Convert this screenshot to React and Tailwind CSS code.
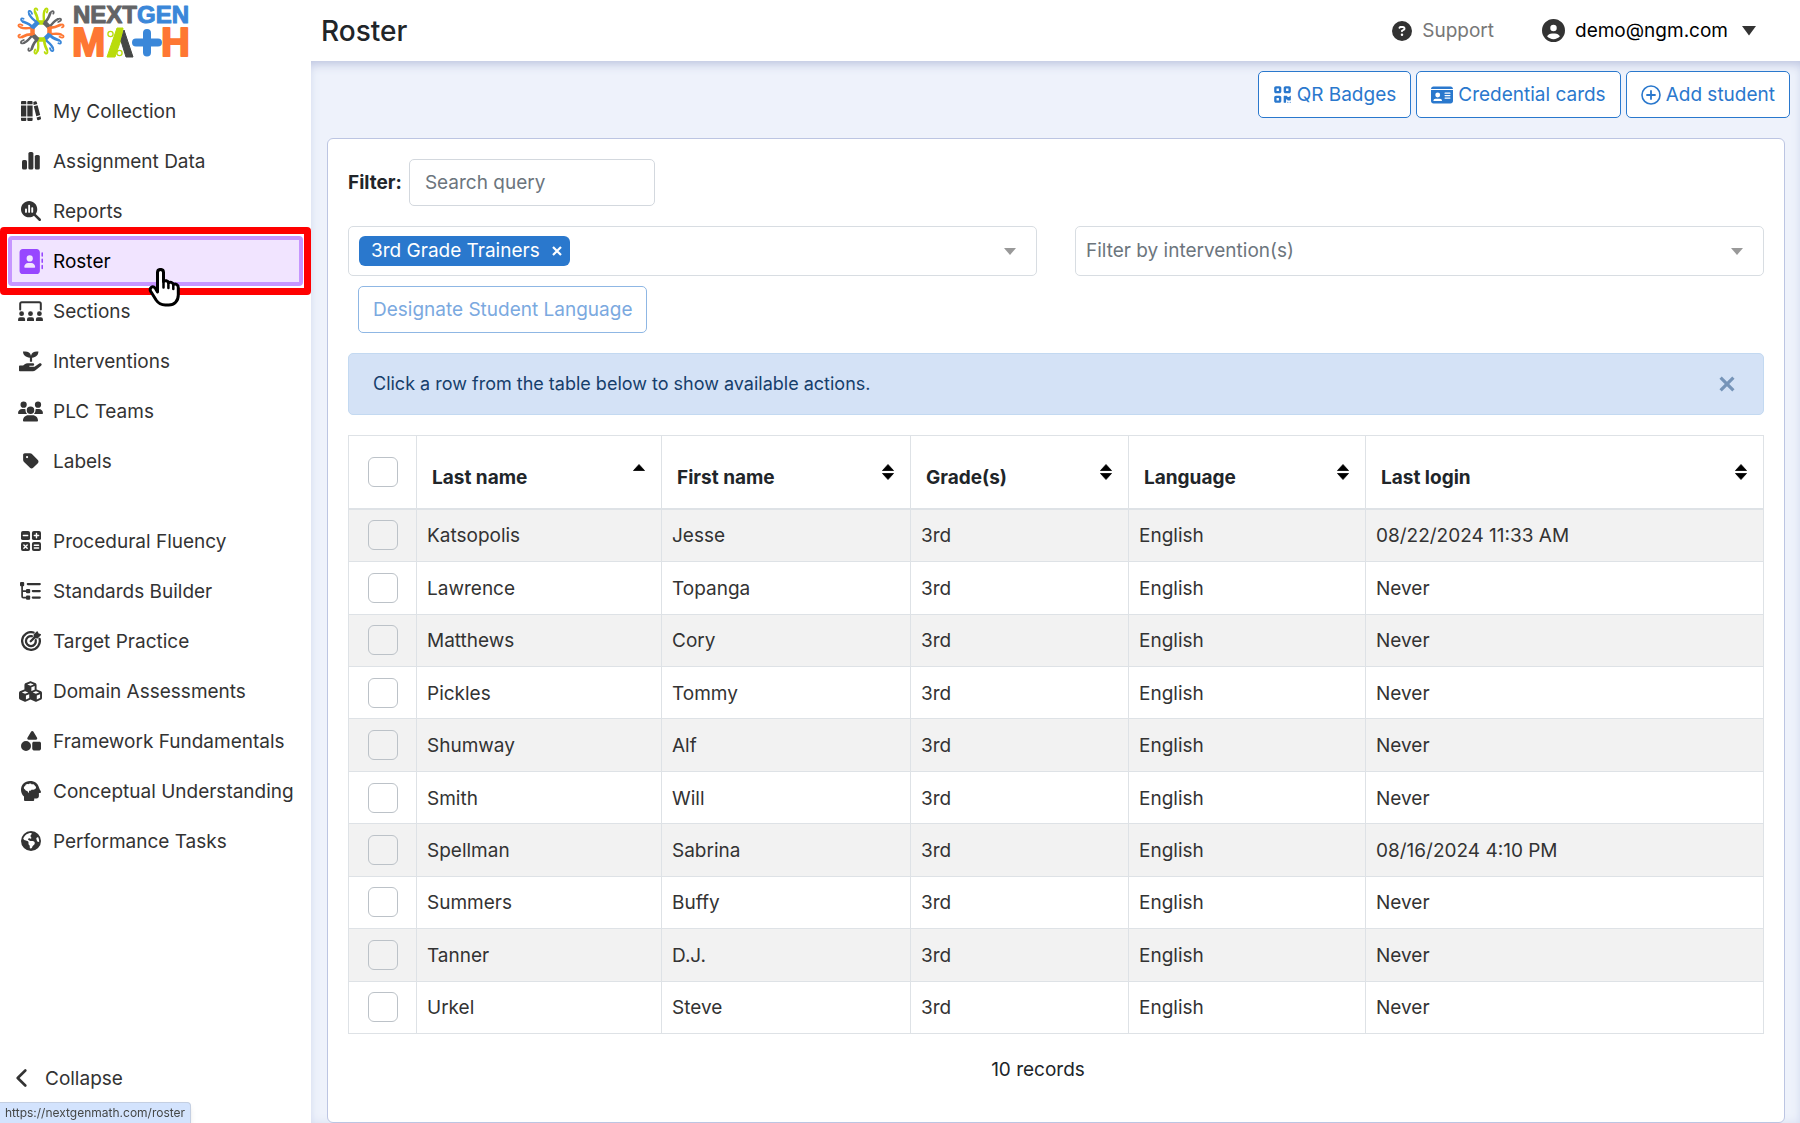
import React, { useState } from 'react'
import {
  FaAddressBook,
  FaCircleQuestion,
  FaCircleUser,
  FaCubes,
  FaEarthAmericas,
  FaIdCard,
  FaMagnifyingGlassChart,
  FaQrcode,
  FaShapes,
  FaTag,
  FaUsers,
} from 'react-icons/fa6'

function BooksIcon() {
  return (
    <svg width="20" height="20" viewBox="0 0 20 20" fill="currentColor" aria-hidden="true">
      <path d="M1 0h3.400a.9.9 0 0 1 .9.9V3.200H0V1a1 1 0 0 1 1-1zM0 4.400h5.300v11.200H0zM0 16.800h5.300v2.300a.9.9 0 0 1-.9.9H1a1 1 0 0 1-1-1z" />
      <path d="M7.300 0h3.400a.9.9 0 0 1 .9.900V3.200H6.300V1a1 1 0 0 1 1-1zM6.300 4.400h5.300v11.200H6.300zM6.300 16.800h5.300v2.300a.9.9 0 0 1-.9.900H7.300a1 1 0 0 1-1-1z" />
      <path d="M12.300.9l2.200-.7a1 1 0 0 1 1.200.7l.6 2.100-3.700 1zM12.800 5.300l3.800-1 2.600 9.800-3.900 1.100zM15.600 16.400l3.900-1.100.5 2.100a1 1 0 0 1-.7 1.200l-2 .6a1 1 0 0 1-1.200-.7z" />
    </svg>
  )
}

function BarsIcon() {
  return (
    <svg width="20" height="20" viewBox="0 0 20 20" fill="currentColor" aria-hidden="true">
      <rect x="1" y="9" width="5" height="9.500" rx="1.600" />
      <rect x="7.400" y="1" width="5" height="17.500" rx="1.600" />
      <rect x="13.800" y="4" width="5" height="14.500" rx="1.600" />
    </svg>
  )
}

function ScreenUsersIcon() {
  return (
    <svg width="25" height="20" viewBox="0 0 25 20" fill="currentColor" aria-hidden="true">
      <path d="M2.200 8.500V2.700A1.500 1.500 0 0 1 3.700 1.200h17.600a1.500 1.500 0 0 1 1.500 1.500v5.800" fill="none" stroke="currentColor" strokeWidth="2" strokeLinecap="round" />
      {[3.600, 12.500, 21.400].map((x) => (
        <g key={x} transform={`translate(${x} 0)`}>
          <circle cx="0" cy="12.700" r="2.400" />
          <path d="M-1.500 16.200h3a2 2 0 0 1 2 2v1.800h-7v-1.800a2 2 0 0 1 2-2z" />
        </g>
      ))}
    </svg>
  )
}

function HandSeedlingIcon() {
  return (
    <svg width="23" height="21" viewBox="0 0 23 21" fill="currentColor" aria-hidden="true">
      <path d="M4 .6h2.200c3 0 5.200 1.500 5.800 4.100C12.600 2.100 14.800.6 17.800.6H19.400c0 3.600-2.400 5.900-6.300 6.100v4h-2.200v-4C6.800 6.500 4 4.200 4 .6z" />
      <path d="M.8 14.600h3.300l1.600-1.300c.9-.7 1.900-1 3-1h5.200c1.700 0 1.700 2.500 0 2.500H10.400v1h5.200l4.600-3.300c1.700-1.100 3.400.9 1.900 2.200l-5.600 4.600c-.8.600-1.600.9-2.600.9H.8a.8.8 0 0 1-.8-.8v-4a.8.800 0 0 1 .8-.8z" />
    </svg>
  )
}

function CalculatorIcon() {
  return (
    <svg width="20" height="20" viewBox="0 0 21 21" fill="currentColor" aria-hidden="true">
      <rect x="0" y="0" width="9.500" height="9.500" rx="2" />
      <rect x="11.500" y="0" width="9.500" height="9.500" rx="2" />
      <rect x="0" y="11.500" width="9.500" height="9.500" rx="2" />
      <rect x="11.500" y="11.500" width="9.500" height="9.500" rx="2" />
      <g stroke="#fff" strokeWidth="1.500" strokeLinecap="round">
        <path d="M2.500 4.800h4.500M14 4.800h4.500M16.250 2.500v4.600M3 14.600l3.500 3.500M6.500 14.600L3 18.100M14 15h4.500M14 17.800h4.500" />
      </g>
    </svg>
  )
}

function ListTreeIcon() {
  return (
    <svg width="21" height="18" viewBox="0 0 21 18" fill="currentColor" aria-hidden="true">
      <rect x="0" y="0" width="4.200" height="4.200" rx="1" />
      <rect x="6" y="7" width="4.200" height="4.200" rx="1" />
      <rect x="6" y="13.500" width="4.200" height="4.200" rx="1" />
      <path d="M2.100 3v11.400a1.200 1.200 0 0 0 1.200 1.200H7M2.100 9.100H7" fill="none" stroke="currentColor" strokeWidth="1.700" />
      <path d="M7.800 2.100h12M12.800 9.100h7M12.800 15.600h7" stroke="currentColor" strokeWidth="2.200" strokeLinecap="round" />
    </svg>
  )
}

function TargetIcon() {
  return (
    <svg width="20" height="20" viewBox="0 0 21 21" fill="none" stroke="currentColor" aria-hidden="true">
      <path d="M13.200 1.600A9.300 9.300 0 1 0 19.500 8.200" strokeWidth="2.400" strokeLinecap="round" />
      <path d="M11.400 5.500A5.200 5.200 0 1 0 15.500 9.700" strokeWidth="2.400" strokeLinecap="round" />
      <path d="M10.200 10.800L15.500 5.500" strokeWidth="2.400" strokeLinecap="round" />
      <path d="M14 6.900V4L17 1l.8 2.200 2.400.8-3 3z" fill="currentColor" strokeWidth="1.600" strokeLinejoin="round" />
    </svg>
  )
}

function BrainHeadIcon() {
  return (
    <svg width="20" height="20" viewBox="0 0 20 20" aria-hidden="true">
      <path d="M9 0c5 0 8 2.700 8.900 6.300.4 1.500 1 2.500 1.800 3.800.6 1 .1 1.900-.9 1.900h-.9v3c0 1.500-.9 2.500-2.400 2.500h-2.300v1.500a1 1 0 0 1-1 1H4a1 1 0 0 1-1-1v-3.400C1.100 13.800 0 11.400 0 8.900 0 3.700 3.700 0 9 0z" fill="currentColor" />
      <path d="M4 8.600C2.300 7.700 2.500 5.300 4.200 4.900 4.400 3.500 6.100 2.700 7.300 3.300c1.100-1 2.900-.9 3.600.1 1.400-.5 2.700.2 3 1.300 1.500.6 1.500 2.700.1 3.400-.8.800-2.200.700-3.100.4-.6 1-1.800 1.300-2.900 1.200V12.300L6.200 10C5.200 10.100 4.300 9.500 4 8.600z" fill="#fff" />
    </svg>
  )
}

const PRIMARY_LINKS = [
  { label: 'My Collection', icon: <BooksIcon /> },
  { label: 'Assignment Data', icon: <BarsIcon /> },
  { label: 'Reports', icon: <FaMagnifyingGlassChart size={20} /> },
  { label: 'Roster', icon: <FaAddressBook size={25} className="text-[#9747ff]" />, active: true },
  { label: 'Sections', icon: <ScreenUsersIcon /> },
  { label: 'Interventions', icon: <HandSeedlingIcon /> },
  { label: 'PLC Teams', icon: <FaUsers size={25} /> },
  { label: 'Labels', icon: <FaTag size={18} /> },
]

const SECONDARY_LINKS = [
  { label: 'Procedural Fluency', icon: <CalculatorIcon /> },
  { label: 'Standards Builder', icon: <ListTreeIcon /> },
  { label: 'Target Practice', icon: <TargetIcon /> },
  { label: 'Domain Assessments', icon: <FaCubes size={23} /> },
  { label: 'Framework Fundamentals', icon: <FaShapes size={20} /> },
  { label: 'Conceptual Understanding', icon: <BrainHeadIcon /> },
  { label: 'Performance Tasks', icon: <FaEarthAmericas size={20} /> },
]

const STUDENTS = [
  { last: 'Katsopolis', first: 'Jesse', login: '08/22/2024 11:33 AM' },
  { last: 'Lawrence', first: 'Topanga', login: 'Never' },
  { last: 'Matthews', first: 'Cory', login: 'Never' },
  { last: 'Pickles', first: 'Tommy', login: 'Never' },
  { last: 'Shumway', first: 'Alf', login: 'Never' },
  { last: 'Smith', first: 'Will', login: 'Never' },
  { last: 'Spellman', first: 'Sabrina', login: '08/16/2024 4:10 PM' },
  { last: 'Summers', first: 'Buffy', login: 'Never' },
  { last: 'Tanner', first: 'D.J.', login: 'Never' },
  { last: 'Urkel', first: 'Steve', login: 'Never' },
]

const COLUMNS = [
  { label: 'Last name', sort: 'asc' },
  { label: 'First name' },
  { label: 'Grade(s)' },
  { label: 'Language' },
  { label: 'Last login' },
]

const BURST = ['#b9dc0b', '#636466', '#fe7733', '#3a87d9', '#b9dc0b', '#636466', '#fe7733', '#3a87d9']

function Logo() {
  return (
    <svg width="178" height="60" viewBox="0 0 178 60" role="img" aria-label="NextGen Math" className="shrink-0 overflow-visible">
      <g transform="translate(27 30)" fill="none" strokeLinecap="round">
        {BURST.map((color, i) => (
          <g key={i} stroke={color} transform={`rotate(${i * 45})`}>
            <path d="M-4 -8.500H4.500" strokeWidth="4.500" strokeLinecap="butt" />
            <path d="M-3.500 -9C-2.800 -13 -4.500 -16 -6 -19" strokeWidth="2.700" />
            <path d="M-6 -19C-7.500 -22.500 -4.500 -24 -3.600 -21" strokeWidth="1.800" />
            <path d="M3 -9C3 -13 2 -17 3.500 -20" strokeWidth="2.400" />
            <path d="M3.500 -20C4.800 -24.500 7.800 -22.500 5.800 -18.500" strokeWidth="1.800" />
          </g>
        ))}
      </g>
      <g fontFamily="Liberation Sans, sans-serif" fontWeight="700" strokeLinejoin="round">
        <text x="59" y="22" fontSize="24" fill="#636466" stroke="#636466" strokeWidth="1">
          NEXT<tspan fill="#3a87d9" stroke="#3a87d9">GEN</tspan>
        </text>
        <g fontSize="40" fill="#fe7733" stroke="#fe7733" strokeWidth="2">
          <text x="58" y="55">M</text>
          <text x="147" y="55">H</text>
        </g>
      </g>
      <path d="M103 27h6l-1 9-7 20h-8z" fill="#b9dc0b" stroke="#b9dc0b" strokeLinejoin="round" />
      <circle cx="96.500" cy="33" r="2.600" fill="#fff" stroke="#b9dc0b" strokeWidth="1.300" />
      <circle cx="105.500" cy="52" r="2.600" fill="#fff" stroke="#b9dc0b" strokeWidth="1.300" />
      <path d="M110 29l9 27h-7l-5-16z" fill="#454746" stroke="#454746" strokeLinejoin="round" />
      <path d="M122 41.500h22M133 32v19.500" stroke="#3a87d9" strokeWidth="8" strokeLinecap="round" />
    </svg>
  )
}

function NavItem({ label, icon, active }) {
  if (!active) {
    return (
      <li>
        <a href="#" className="mx-2 flex h-[50px] items-center gap-[10px] pl-[10px] text-[#333]">
          <span className="flex w-[25px] justify-center">{icon}</span>
          <span className="pt-[2px]">{label}</span>
        </a>
      </li>
    )
  }
  return (
    <li className="relative">
      <a
        href="/roster"
        aria-current="page"
        className="mx-2 flex h-[50px] items-center gap-[10px] rounded-sm border-4 border-[#c696ff] bg-[#f1e4ff] pl-[6px] text-black"
      >
        <span className="flex w-[25px] justify-center">{icon}</span>
        <span className="pt-[2px]">{label}</span>
      </a>
      <div className="pointer-events-none absolute inset-x-0 -inset-y-[9px] rounded border-[7px] border-[#ff0000]" />
      <svg className="pointer-events-none absolute top-8 left-[148px]" width="34" height="40" viewBox="0 0 34 40" aria-hidden="true">
        <path
          d="M9.500 24V4.600c0-4.200 6-4.200 6 0V13.500c1.300-1.300 4.400-1 4.900 1.300 1.600-1.100 4.500-.5 4.900 1.700 2.300-1.200 5 .2 5 3v7.500c0 6-4 10-9.500 10h-3.500c-4 0-7-1.700-9.200-5L2.800 23.500c-2-3.700 1.700-6.200 4.400-3.500z"
          fill="#fff"
          stroke="#000"
          strokeWidth="3"
          strokeLinejoin="round"
        />
        <path d="M15.500 13v6.500M20.400 15v5M25.300 17v4" stroke="#000" strokeWidth="2.500" strokeLinecap="round" />
      </svg>
    </li>
  )
}

function Sidebar() {
  return (
    <aside className="flex min-h-screen w-[311px] shrink-0 flex-col bg-white">
      <a href="#" className="flex h-[61px] items-center pl-[14px]"><Logo /></a>
      <nav className="mt-[25px] flex flex-col gap-[30px]">
        <ul>{PRIMARY_LINKS.map((l) => <NavItem key={l.label} {...l} />)}</ul>
        <ul>{SECONDARY_LINKS.map((l) => <NavItem key={l.label} {...l} />)}</ul>
      </nav>
      <button type="button" className="mt-auto mb-5 flex h-[50px] items-center gap-[18px] pl-4 text-[#333]">
        <svg width="11" height="18" viewBox="0 0 11 18" fill="none" stroke="currentColor" strokeWidth="2.600" strokeLinecap="round" strokeLinejoin="round" aria-hidden="true">
          <path d="M9.300 1.500L1.700 9l7.600 7.500" />
        </svg>
        <span className="pt-[2px]">Collapse</span>
      </button>
    </aside>
  )
}

function SortArrows({ sort }) {
  return (
    <svg width="12" height="16" viewBox="0 0 12 16" className="mt-[28px] shrink-0" aria-hidden="true">
      <path d="M6 .5L11.500 6.500H.5z" stroke="#000" strokeWidth=".8" strokeLinejoin="round" />
      {sort !== 'asc' && <path d="M6 15.500L.5 9.500h11z" stroke="#000" strokeWidth=".8" strokeLinejoin="round" />}
    </svg>
  )
}

function Caret() {
  return (
    <svg width="12" height="7" viewBox="0 0 12 7" className="pointer-events-none shrink-0 text-[#999]" aria-hidden="true">
      <path d="M0 0h12L6 7z" fill="currentColor" />
    </svg>
  )
}

function Checkbox({ label }) {
  return (
    <input
      type="checkbox"
      aria-label={label}
      className="mx-auto block size-[30px] appearance-none rounded-md border border-[#bcc2c8] checked:bg-[#2a78cd]"
    />
  )
}

function ActionButton({ icon, children }) {
  return (
    <button type="button" className="flex h-[47px] items-center gap-[5px] rounded-[5px] border border-[#2a78cd] bg-white px-[14px] text-[#2a78cd]">
      {icon}
      {children}
    </button>
  )
}

export default function App() {
  const [query, setQuery] = useState('')
  const [showHint, setShowHint] = useState(true)
  const [sections, setSections] = useState(['3rd Grade Trainers'])

  const rows = STUDENTS.filter((s) => `${s.first} ${s.last}`.toLowerCase().includes(query.toLowerCase()))

  return (
    <div className="flex min-h-screen bg-white font-[Inter,sans-serif] text-[19px] leading-7 text-[#212529]">
      <Sidebar />

      <div className="flex min-w-0 flex-1 flex-col">
        <header className="flex h-[61px] items-center pr-[44px] pl-[10px]">
          <h1 className="text-[28px] font-medium">Roster</h1>
          <a href="#" className="ml-auto flex items-center gap-[10px] text-[#777]">
            <FaCircleQuestion size={20} className="text-[#333]" />
            Support
          </a>
          <button type="button" className="ml-[48px] flex items-center gap-[10px] text-black">
            <FaCircleUser size={23} className="text-[#333]" />
            demo@ngm.com
            <svg width="14" height="10" viewBox="0 0 14 10" className="ml-1" aria-hidden="true">
              <path d="M0 0h14L7 9.500z" fill="#333" />
            </svg>
          </button>
        </header>

        <main className="flex flex-1 flex-col bg-[#eef2fb] shadow-[inset_0_10px_12px_-8px_#b9c0dc,inset_0_0_10px_#d8dff2]">
          <div className="flex justify-end gap-[5px] pt-[10px] pr-[10px] pb-5">
            <ActionButton icon={<FaQrcode size={19} />}>QR Badges</ActionButton>
            <ActionButton icon={<FaIdCard size={22} />}>Credential cards</ActionButton>
            <ActionButton
              icon={(
                <svg width="20" height="20" viewBox="0 0 20 20" fill="none" stroke="currentColor" strokeLinecap="round" aria-hidden="true">
                  <circle cx="10" cy="10" r="9" strokeWidth="1.600" />
                  <path d="M10 6v8M6 10h8" strokeWidth="1.800" />
                </svg>
              )}
            >
              Add student
            </ActionButton>
          </div>

          <section className="mr-[15px] ml-4 flex-1 rounded-md border border-[#bcc5e2] bg-white px-5 pt-5">
            <div className="flex items-center gap-[7px]">
              <label htmlFor="query" className="font-bold">Filter:</label>
              <input
                id="query"
                type="text"
                value={query}
                onChange={(e) => setQuery(e.target.value)}
                placeholder="Search query"
                className="h-[47px] w-[246px] rounded-[5px] border border-[#d3d8de] px-[15px] placeholder:text-[#6c757d]"
              />
            </div>

            <div className="mt-5 grid grid-cols-2 gap-[38px]">
              <div className="flex h-[50px] items-center rounded-[5px] border border-[#d8dde2] pr-5 pl-[10px]">
                {sections.map((s) => (
                  <span key={s} className="flex h-[30px] items-center gap-3 rounded-md bg-[#2a78cd] pr-2 pl-3 whitespace-nowrap text-white">
                    {s}
                    <button type="button" aria-label={`Remove ${s}`} onClick={() => setSections([])}>
                      <svg width="10" height="10" viewBox="0 0 10 10" stroke="currentColor" strokeWidth="2.200" aria-hidden="true">
                        <path d="M1 1l8 8M9 1L1 9" />
                      </svg>
                    </button>
                  </span>
                ))}
                <select aria-label="Filter by section(s)" className="min-w-0 flex-1 appearance-none self-stretch" defaultValue="">
                  <option value="" />
                </select>
                <Caret />
              </div>
              <div className="flex h-[50px] items-center rounded-[5px] border border-[#d8dde2] pr-5 pl-[10px]">
                <select aria-label="Filter by intervention(s)" className="min-w-0 flex-1 appearance-none self-stretch text-[#6c757d]" defaultValue="">
                  <option value="">Filter by intervention(s)</option>
                </select>
                <Caret />
              </div>
            </div>

            <button type="button" disabled className="mt-[10px] ml-[10px] block h-[47px] rounded-[5px] border border-[#8fb7e4] px-[14px] text-[#7ba9df]">
              Designate Student Language
            </button>

            {showHint && (
              <div className="mt-5 flex h-[62px] items-center justify-between rounded-[5px] border border-[#c3d9f1] bg-[#d4e2f6] pr-7 pl-6 text-[18px] text-[#163e6b]">
                Click a row from the table below to show available actions.
                <button type="button" aria-label="Dismiss" onClick={() => setShowHint(false)} className="text-[#7694b8]">
                  <svg width="16" height="16" viewBox="0 0 15 15" stroke="currentColor" strokeWidth="3" aria-hidden="true">
                    <path d="M1.500 1.500l12 12M13.500 1.500l-12 12" />
                  </svg>
                </button>
              </div>
            )}

            <table className="mt-5 h-[599px] w-full table-fixed border-collapse border border-[#dee2e6] text-left">
              <colgroup>
                <col className="w-[68px]" />
                <col className="w-[245px]" />
                <col className="w-[249px]" />
                <col className="w-[218px]" />
                <col className="w-[237px]" />
                <col />
              </colgroup>
              <thead>
                <tr className="h-[73px] border-b-2 border-[#dee2e6]">
                  <th scope="col"><Checkbox label="Select all" /></th>
                  {COLUMNS.map((c) => (
                    <th key={c.label} scope="col" className="border-l border-[#dee2e6] py-0 pr-4 pl-[15px] align-top font-bold">
                      <button type="button" className="flex w-full items-start justify-between text-left">
                        <span className="mt-[28px]">{c.label}</span>
                        <SortArrows sort={c.sort} />
                      </button>
                    </th>
                  ))}
                </tr>
              </thead>
              <tbody className="text-[#333]">
                {rows.map((s) => (
                  <tr key={s.last} className="border-b border-[#dee2e6] odd:bg-[#f2f2f2]">
                    <td><Checkbox label={`Select ${s.first} ${s.last}`} /></td>
                    {[s.last, s.first, '3rd', 'English', s.login].map((value, i) => (
                      <td key={i} className="border-l border-[#dee2e6] px-[10px] pt-[2px]">{value}</td>
                    ))}
                  </tr>
                ))}
              </tbody>
            </table>

            <p className="mt-[22px] -ml-9 text-center">{rows.length} records</p>
          </section>
        </main>
      </div>

      <div className="fixed bottom-0 left-0 rounded-tr border-t border-r border-[#c4cfe2] bg-[#d3e3fd] px-[5px] text-[12px] leading-[20px] text-[#454746] shadow-md">
        https://nextgenmath.com/roster
      </div>
    </div>
  )
}
